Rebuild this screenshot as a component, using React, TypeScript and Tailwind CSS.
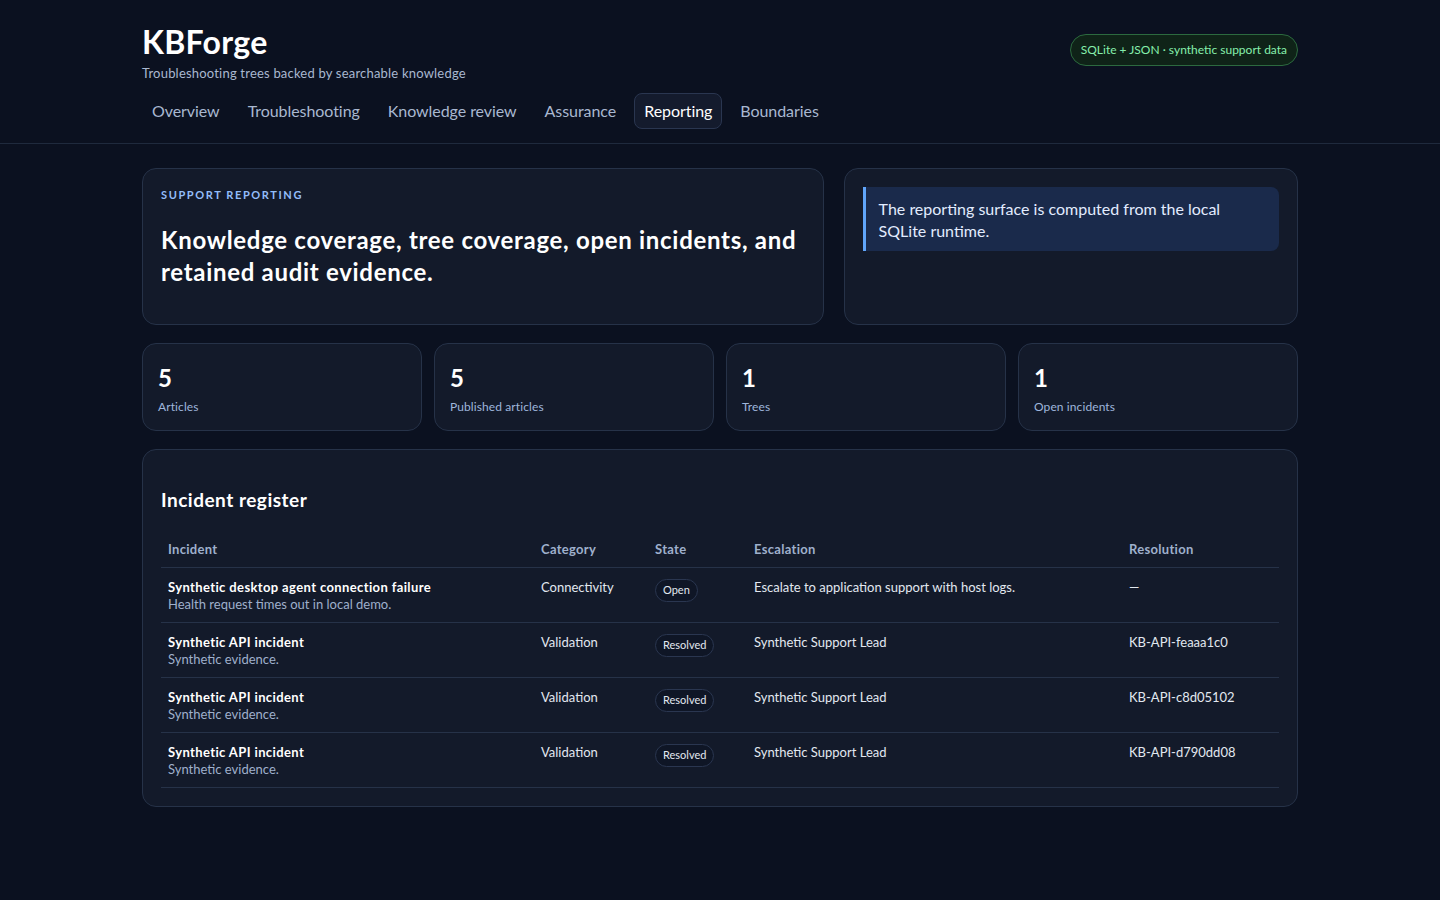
import React from "react";

const font = { fontFamily: '"Segoe UI", Lato, "Noto Sans", sans-serif' };

const navItems = ["Overview", "Troubleshooting", "Knowledge review", "Assurance", "Reporting", "Boundaries"];

const stats = [
  { n: "5", l: "Articles" },
  { n: "5", l: "Published articles" },
  { n: "1", l: "Trees" },
  { n: "1", l: "Open incidents" },
];

const rows = [
  {
    t: "Synthetic desktop agent connection failure",
    s: "Health request times out in local demo.",
    c: "Connectivity",
    st: "Open",
    e: "Escalate to application support with host logs.",
    r: "—",
  },
  { t: "Synthetic API incident", s: "Synthetic evidence.", c: "Validation", st: "Resolved", e: "Synthetic Support Lead", r: "KB-API-feaaa1c0" },
  { t: "Synthetic API incident", s: "Synthetic evidence.", c: "Validation", st: "Resolved", e: "Synthetic Support Lead", r: "KB-API-c8d05102" },
  { t: "Synthetic API incident", s: "Synthetic evidence.", c: "Validation", st: "Resolved", e: "Synthetic Support Lead", r: "KB-API-d790dd08" },
];

export default function App() {
  return (
    <div className="min-h-[900px] bg-[#0b1120] text-[#e2e8f0]" style={font}>
      <header className="border-b border-[#1f2a3d]">
        <div className="mx-auto w-[1156px] pt-[22px] pb-[14px]">
          <div className="flex items-start justify-between">
            <div>
              <h1 className="text-[32px] font-bold leading-[40px] tracking-[0.3px] text-white">KBForge</h1>
              <p className="mt-[2px] text-[13px] leading-[18px] tracking-[0.2px] text-[#a9b8d0]">Troubleshooting trees backed by searchable knowledge</p>
            </div>
            <div className="mt-[12px] flex h-[32px] items-center rounded-full border border-[#2c6a3f] bg-[#0f2318] px-[10px] text-[12px] text-[#86efac]">
              SQLite + JSON · synthetic support data
            </div>
          </div>
          <nav className="mt-[11px] flex gap-2">
            {navItems.map((n) => (
              <div
                key={n}
                className={
                  n === "Reporting"
                    ? "flex h-[36px] items-center rounded-lg border border-[#2a3650] bg-[#141b2d] px-[9px] text-[16px] tracking-[-0.06px] text-white"
                    : "flex h-[36px] items-center rounded-lg border border-transparent px-[9px] text-[16px] tracking-[-0.06px] text-[#a9b8d0]"
                }
              >
                {n}
              </div>
            ))}
          </nav>
        </div>
      </header>

      <main className="mx-auto w-[1156px] pt-[24px] pb-[94px]">
        <section className="grid grid-cols-[3fr_2fr] gap-[20px]">
          <div className="h-[157px] rounded-[14px] border border-[#263248] bg-[#131a2a] px-[18px] pt-[19px]">
            <div className="text-[11px] font-bold uppercase leading-[14px] tracking-[1.6px] text-[#93bdfa]">Support reporting</div>
            <h2 className="mt-[22px] text-[24px] font-bold leading-[32px] tracking-[0.7px] text-white">
              Knowledge coverage, tree coverage, open incidents, and retained audit evidence.
            </h2>
          </div>
          <div className="h-[157px] rounded-[14px] border border-[#263248] bg-[#131a2a] p-[18px]">
            <div className="rounded-r-lg border-l-[3px] border-[#60a5fa] bg-[#1a2a4b] pt-[11px] pb-[9px] pl-[13px] pr-[30px] text-[16px] leading-[22px] text-[#e2ecff]">
              The reporting surface is computed from the local SQLite runtime.
            </div>
          </div>
        </section>

        <section className="mt-[18px] grid grid-cols-4 gap-[12px]">
          {stats.map((s) => (
            <div key={s.l} className="h-[88px] rounded-[14px] border border-[#263248] bg-[#131a2a] px-[15px] pt-[19px]">
              <div className="text-[24px] font-bold leading-[30px] text-white">{s.n}</div>
              <div className="mt-[6px] text-[12px] leading-[16px] tracking-[0.1px] text-[#9fb6dc]">{s.l}</div>
            </div>
          ))}
        </section>

        <section className="mt-[18px] rounded-[14px] border border-[#263248] bg-[#131a2a] px-[18px] pt-[37px] pb-[18px]">
          <h3 className="text-[19px] font-bold leading-[26px] tracking-[0.5px] text-white">Incident register</h3>
          <table className="mt-[19px] w-full table-fixed border-collapse text-[13px]">
            <colgroup>
              <col className="w-[373px]" />
              <col className="w-[114px]" />
              <col className="w-[99px]" />
              <col className="w-[375px]" />
              <col />
            </colgroup>
            <thead>
              <tr className="border-b border-[#263248]">
                {["Incident", "Category", "State", "Escalation", "Resolution"].map((h) => (
                  <th key={h} className="px-[7px] pt-[8px] pb-[9px] text-left font-bold leading-[18px] tracking-[0.3px] text-[#9fb0cc]">
                    {h}
                  </th>
                ))}
              </tr>
            </thead>
            <tbody>
              {rows.map((r, i) => (
                <tr key={i} className="h-[55px] border-b border-[#263248] align-top">
                  <td className="px-[7px] pt-[10px]">
                    <div className="font-bold leading-[18px] tracking-[0.38px] text-white">{r.t}</div>
                    <div className="leading-[16px] text-[#9fb0cc]">{r.s}</div>
                  </td>
                  <td className="px-[7px] pt-[10px] leading-[18px] text-[#e2e8f0]">{r.c}</td>
                  <td className="px-[7px] pt-[11px]">
                    <span className="inline-flex h-[23px] items-center rounded-full border border-[#2a3650] bg-[#0f1626] px-[7px] text-[11px] text-[#e2e8f0]">
                      {r.st}
                    </span>
                  </td>
                  <td className="px-[7px] pt-[10px] leading-[18px] text-[#e2e8f0]">{r.e}</td>
                  <td className="px-[7px] pt-[10px] leading-[18px] text-[#e2e8f0]">{r.r === "—" ? <span className="inline-block w-[14px]">—</span> : r.r}</td>
                </tr>
              ))}
            </tbody>
          </table>
        </section>
      </main>
    </div>
  );
}
